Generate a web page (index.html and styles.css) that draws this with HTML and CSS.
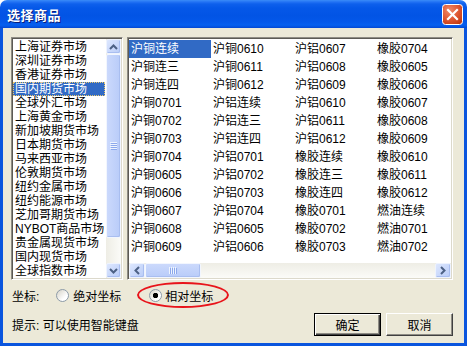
FILE: index.html
```html
<!DOCTYPE html>
<html>
<head>
<meta charset="utf-8">
<title>选择商品</title>
<link rel="stylesheet" href="styles.css">
</head>
<body>
<div class="window">
  <div class="titlebar">
    <span class="title">选择商品</span>
    <span class="close">
      <svg width="21" height="21" viewBox="0 0 21 21">
        <defs>
          <radialGradient id="cg" cx="35%" cy="30%" r="80%">
            <stop offset="0" stop-color="#F08A6A"/>
            <stop offset="0.6" stop-color="#DD5530"/>
            <stop offset="1" stop-color="#C23A12"/>
          </radialGradient>
        </defs>
        <rect x="0.5" y="0.5" width="20" height="20" rx="3" fill="url(#cg)" stroke="#fff"/>
        <path d="M6 6 L15 15 M15 6 L6 15" stroke="#fff" stroke-width="2.2" stroke-linecap="square"/>
      </svg>
    </span>
  </div>
  <div class="content">
    <div class="lists">
      <div class="listbox">
        <ul class="items">
          <li>上海证券市场</li>
          <li>深圳证券市场</li>
          <li>香港证券市场</li>
          <li class="sel">国内期货市场</li>
          <li>全球外汇市场</li>
          <li>上海黄金市场</li>
          <li>新加坡期货市场</li>
          <li>日本期货市场</li>
          <li>马来西亚市场</li>
          <li>伦敦期货市场</li>
          <li>纽约金属市场</li>
          <li>纽约能源市场</li>
          <li>芝加哥期货市场</li>
          <li>NYBOT商品市场</li>
          <li>贵金属现货市场</li>
          <li>国内现货市场</li>
          <li>全球指数市场</li>
        </ul>
        <div class="vscroll">
          <div class="sbtn vbtn">
            <svg width="9" height="6" viewBox="0 0 9 6"><path d="M1 5 L4.5 1.5 L8 5" fill="none" stroke="#4D6185" stroke-width="2"/></svg>
          </div>
          <div class="vthumb">
            <svg width="7" height="8" viewBox="0 0 7 8"><path d="M0 0.5H7M0 2.5H7M0 4.5H7M0 6.5H7" stroke="#EEF4FE" stroke-width="1"/><path d="M1 1.5H8M1 3.5H8M1 5.5H8M1 7.5H8" stroke="#8CA8EC" stroke-width="1"/></svg>
          </div>
          <div class="vtrack"></div>
          <div class="sbtn vbtn">
            <svg width="9" height="6" viewBox="0 0 9 6"><path d="M1 1 L4.5 4.5 L8 1" fill="none" stroke="#4D6185" stroke-width="2"/></svg>
          </div>
        </div>
      </div>
      <div class="gridbox">
        <div class="cells">
          <span class="cell sel">沪铜连续</span>
          <span class="cell">沪铜连三</span>
          <span class="cell">沪铜连四</span>
          <span class="cell">沪铜0701</span>
          <span class="cell">沪铜0702</span>
          <span class="cell">沪铜0703</span>
          <span class="cell">沪铜0704</span>
          <span class="cell">沪铜0605</span>
          <span class="cell">沪铜0606</span>
          <span class="cell">沪铜0607</span>
          <span class="cell">沪铜0608</span>
          <span class="cell">沪铜0609</span>
          <span class="cell">沪铜0610</span>
          <span class="cell">沪铜0611</span>
          <span class="cell">沪铜0612</span>
          <span class="cell">沪铝连续</span>
          <span class="cell">沪铝连三</span>
          <span class="cell">沪铝连四</span>
          <span class="cell">沪铝0701</span>
          <span class="cell">沪铝0702</span>
          <span class="cell">沪铝0703</span>
          <span class="cell">沪铝0704</span>
          <span class="cell">沪铝0605</span>
          <span class="cell">沪铝0606</span>
          <span class="cell">沪铝0607</span>
          <span class="cell">沪铝0608</span>
          <span class="cell">沪铝0609</span>
          <span class="cell">沪铝0610</span>
          <span class="cell">沪铝0611</span>
          <span class="cell">沪铝0612</span>
          <span class="cell">橡胶连续</span>
          <span class="cell">橡胶连三</span>
          <span class="cell">橡胶连四</span>
          <span class="cell">橡胶0701</span>
          <span class="cell">橡胶0702</span>
          <span class="cell">橡胶0703</span>
          <span class="cell">橡胶0704</span>
          <span class="cell">橡胶0605</span>
          <span class="cell">橡胶0606</span>
          <span class="cell">橡胶0607</span>
          <span class="cell">橡胶0608</span>
          <span class="cell">橡胶0609</span>
          <span class="cell">橡胶0610</span>
          <span class="cell">橡胶0611</span>
          <span class="cell">橡胶0612</span>
          <span class="cell">燃油连续</span>
          <span class="cell">燃油0701</span>
          <span class="cell">燃油0702</span>
        </div>
        <div class="hscroll">
          <div class="sbtn hbtn">
            <svg width="6" height="9" viewBox="0 0 6 9"><path d="M5 1 L1.5 4.5 L5 8" fill="none" stroke="#4D6185" stroke-width="2"/></svg>
          </div>
          <div class="hthumb">
            <svg width="8" height="7" viewBox="0 0 8 7"><path d="M0.5 0V7M2.5 0V7M4.5 0V7M6.5 0V7" stroke="#EEF4FE" stroke-width="1"/><path d="M1.5 1V8M3.5 1V8M5.5 1V8M7.5 1V8" stroke="#8CA8EC" stroke-width="1"/></svg>
          </div>
          <div class="htrack"></div>
          <div class="sbtn hbtn">
            <svg width="6" height="9" viewBox="0 0 6 9"><path d="M1 1 L4.5 4.5 L1 8" fill="none" stroke="#4D6185" stroke-width="2"/></svg>
          </div>
        </div>
      </div>
    </div>
    <div class="coord">
      <span class="coord-label">坐标:</span>
      <span class="option first"><span class="radio"></span><span>绝对坐标</span></span>
      <span class="option ring"><span class="radio checked"></span><span>相对坐标</span></span>
    </div>
    <div class="footer">
      <span class="tip">提示: 可以使用智能键盘</span>
      <span class="buttons">
        <span class="btn default">确定</span>
        <span class="btn">取消</span>
      </span>
    </div>
  </div>
</div>
</body>
</html>
```

FILE: styles.css
```css
html, body {
  margin: 0;
  padding: 0;
}
body {
  background: #ffffff;
  font-family: "Liberation Sans", "Noto Sans CJK SC", sans-serif;
  font-size: 12px;
  color: #000;
}
.window {
  width: 467px;
  height: 346px;
  display: flex;
  flex-direction: column;
  box-sizing: border-box;
}
.titlebar {
  height: 28px;
  flex: none;
  display: flex;
  align-items: center;
  justify-content: space-between;
  padding: 0 4px 0 7px;
  border-radius: 7px 7px 0 0;
  background: linear-gradient(180deg, #3A8CF8 0px, #2272F4 2px, #0E60EC 4px, #0558E8 8px, #0254E5 16px, #0458EA 22px, #0660EF 25px, #0452E0 27px, #0346D0 28px);
}
.title {
  color: #fff;
  font-family: "Noto Sans CJK SC", sans-serif;
  font-weight: bold;
  font-size: 13px;
  line-height: 16px;
  letter-spacing: 0.5px;
  text-shadow: 1px 1px 0 #0A1E7A;
  margin-top: 1px;
}
.close {
  width: 21px;
  height: 21px;
  display: block;
  margin-top: 1px;
}
.close svg {
  display: block;
}
.content {
  flex: 1;
  background: #ECE9D8;
  border: 3px solid #0A55DE;
  border-top: 0;
  padding: 9px 11px 7px 8px;
  display: flex;
  flex-direction: column;
}
.lists {
  height: 243px;
  flex: none;
  display: flex;
  gap: 4px;
}
.listbox, .gridbox {
  box-sizing: border-box;
  background: #fff;
  border: 1px solid;
  border-color: #8E8C84 #fff #fff #8E8C84;
  box-shadow: inset 1px 1px #5C5A54, inset -1px -1px #DCD9CC;
  padding: 1px;
  display: flex;
  overflow: hidden;
}
.listbox {
  width: 112px;
}
.gridbox {
  flex: 1;
  flex-direction: column;
}
.items {
  list-style: none;
  margin: 0;
  padding: 1px 0 0 0;
  flex: 1;
  overflow: hidden;
}
.items li {
  height: 14px;
  line-height: 14px;
  padding-left: 2px;
  white-space: nowrap;
  overflow: hidden;
}
.items li.sel {
  background: #316AC5;
  color: #fff;
  outline: 1px dotted #E8C870;
  outline-offset: -1px;
  margin-right: 1px;
}
.vscroll {
  width: 15px;
  flex: none;
  display: flex;
  flex-direction: column;
  background: linear-gradient(90deg, #EEEDE5, #FBFBF8);
}
.sbtn {
  box-sizing: border-box;
  flex: none;
  display: flex;
  align-items: center;
  justify-content: center;
  border: 1px solid #EEF3FE;
  border-radius: 2px;
  background: linear-gradient(135deg, #DDE7FE, #B9CCF8);
  box-shadow: inset -1px -1px #A9BEF0;
}
.sbtn svg {
  display: block;
}
.vbtn {
  height: 15px;
}
.hbtn {
  width: 16px;
}
.vthumb, .hthumb {
  box-sizing: border-box;
  flex: none;
  display: flex;
  align-items: center;
  justify-content: center;
  border: 1px solid #F2F6FE;
  border-radius: 2px;
  box-shadow: inset -1px -1px #A9BEF0;
}
.vthumb {
  height: 184px;
  background: linear-gradient(90deg, #CBD9FC, #B9CCF9);
}
.hthumb {
  width: 56px;
  background: linear-gradient(180deg, #CBD9FC, #B9CCF9);
}
.vtrack, .htrack {
  flex: 1;
}
.cells {
  flex: 1;
  display: grid;
  grid-auto-flow: column;
  grid-template-rows: repeat(12, 18px);
  grid-auto-columns: 82px;
  padding-top: 1px;
  overflow: hidden;
}
.cell {
  line-height: 18px;
  padding-left: 2px;
  white-space: nowrap;
}
.cell.sel {
  background: #316AC5;
  color: #fff;
}
.hscroll {
  height: 15px;
  flex: none;
  display: flex;
  background: linear-gradient(180deg, #EEEDE5, #FBFBF8);
}
.coord {
  height: 26px;
  margin-top: 2px;
  flex: none;
  display: flex;
  align-items: center;
  padding-left: 1px;
}
.option {
  display: flex;
  align-items: center;
}
.option.first {
  margin-left: 17px;
  gap: 4px;
}
.option.ring {
  margin-left: 16px;
  height: 26px;
  box-sizing: border-box;
  padding: 0 14px 0 10px;
  gap: 3px;
  border: 2px solid #E8141B;
  border-radius: 50%;
}
.radio {
  width: 13px;
  height: 13px;
  box-sizing: border-box;
  border: 1px solid #8D9BA8;
  border-radius: 50%;
  background: linear-gradient(135deg, #D6D3C8, #FFFFFF 70%);
  flex: none;
}
.radio.checked {
  background: radial-gradient(circle, #000 0 2.4px, transparent 3px), linear-gradient(135deg, #D6D3C8, #FFFFFF 70%);
}
.footer {
  height: 23px;
  margin-top: 5px;
  flex: none;
  display: flex;
  align-items: center;
  padding-left: 1px;
}
.buttons {
  margin-left: auto;
  display: flex;
  gap: 5px;
}
.btn {
  width: 67px;
  height: 23px;
  box-sizing: border-box;
  display: flex;
  align-items: center;
  justify-content: center;
  background: #ECE9D8;
  border: 1px solid;
  border-color: #fff #404040 #404040 #fff;
  box-shadow: inset -1px -1px #8E8C84;
}
.btn.default {
  border: 1px solid #000;
  box-shadow: inset 1px 1px #fff, inset -1px -1px #404040, inset -2px -2px #8E8C84;
}
```
